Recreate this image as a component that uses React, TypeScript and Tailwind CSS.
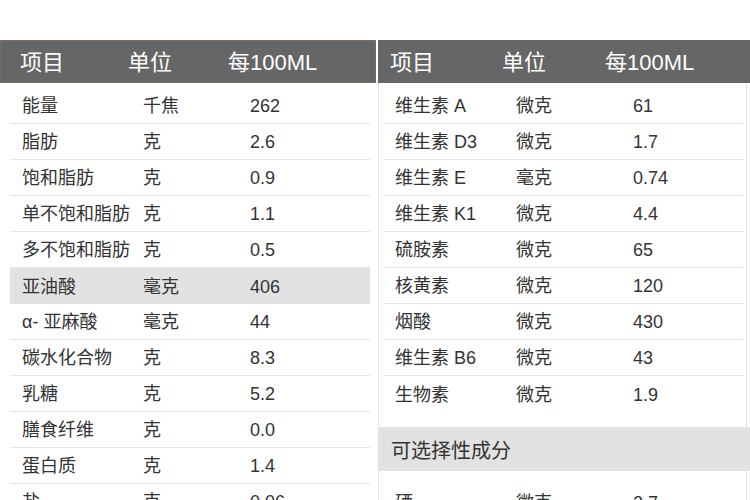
const left: [string, string, string][] = [
  ["能量", "千焦", "262"],
  ["脂肪", "克", "2.6"],
  ["饱和脂肪", "克", "0.9"],
  ["单不饱和脂肪", "克", "1.1"],
  ["多不饱和脂肪", "克", "0.5"],
  ["亚油酸", "毫克", "406"],
  ["α- 亚麻酸", "毫克", "44"],
  ["碳水化合物", "克", "8.3"],
  ["乳糖", "克", "5.2"],
  ["膳食纤维", "克", "0.0"],
  ["蛋白质", "克", "1.4"],
  ["盐", "克", "0.06"],
]

const right: [string, string, string][] = [
  ["维生素 A", "微克", "61"],
  ["维生素 D3", "微克", "1.7"],
  ["维生素 E", "毫克", "0.74"],
  ["维生素 K1", "微克", "4.4"],
  ["硫胺素", "微克", "65"],
  ["核黄素", "微克", "120"],
  ["烟酸", "微克", "430"],
  ["维生素 B6", "微克", "43"],
  ["生物素", "微克", "1.9"],
]

const font = { fontFamily: '"Liberation Sans", "Noto Sans CJK SC", sans-serif' }

export default function App() {
  return (
    <div className="w-[750px] h-[500px] overflow-hidden bg-white pt-[40px] flex" style={font}>
      {/* left table */}
      <div className="w-[376px] shrink-0">
        <div className="h-[43px] bg-[#666666] border border-[#7b6a5e] flex items-center text-white text-[22px] pl-[19px] pt-[2px]">
          <span className="w-[108px]">项目</span>
          <span className="w-[100px]">单位</span>
          <span>每100ML</span>
        </div>
        <div className="pt-[5px] pl-[10px] pr-[6px]">
          {left.map(([n, u, v]) => (
            <div
              key={n}
              className={
                n === "亚油酸"
                  ? "h-[36px] flex items-center pl-[12px] pt-[2px] text-[18px] text-[#333] bg-[#e2e2e2]"
                  : "h-[36px] flex items-center pl-[12px] pt-[2px] text-[18px] text-[#333] border-b border-[#e6e6e6]"
              }
            >
              <span className="w-[121px] whitespace-nowrap">{n}</span>
              <span className="w-[107px]">{u}</span>
              <span>{v}</span>
            </div>
          ))}
        </div>
      </div>

      {/* right table */}
      <div className="w-[372px] shrink-0 ml-[2px]">
        <div className="h-[43px] bg-[#666666] flex items-center text-white text-[22px] pl-[12px] pt-[2px]">
          <span className="w-[112px]">项目</span>
          <span className="w-[103px]">单位</span>
          <span>每100ML</span>
        </div>
        <div className="mr-[3px] border-l border-r border-[#e4e4e4] pt-[5px] pl-[4px] pr-[3px] pb-[15px]">
          {right.map(([n, u, v], i) => (
            <div
              key={n}
              className={
                i === right.length - 1
                  ? "h-[36px] flex items-center pl-[12px] pt-[2px] text-[18px] text-[#333]"
                  : "h-[36px] flex items-center pl-[12px] pt-[2px] text-[18px] text-[#333] border-b border-[#e6e6e6]"
              }
            >
              <span className="w-[121px] whitespace-nowrap">{n}</span>
              <span className="w-[117px]">{u}</span>
              <span>{v}</span>
            </div>
          ))}
        </div>
        <div className="h-[44px] bg-[#e2e2e2] flex items-center pl-[13px] pt-[3px] text-[20px] text-[#333]">可选择性成分</div>
        <div className="mr-[3px] border-l border-r border-[#e4e4e4] pt-[14px] pl-[4px] pr-[3px] h-[60px]">
          <div className="h-[36px] flex items-center pl-[12px] pt-[2px] text-[18px] text-[#333] border-b border-[#e6e6e6]">
            <span className="w-[121px]">硒</span>
            <span className="w-[117px]">微克</span>
            <span>2.7</span>
          </div>
        </div>
      </div>
    </div>
  )
}
